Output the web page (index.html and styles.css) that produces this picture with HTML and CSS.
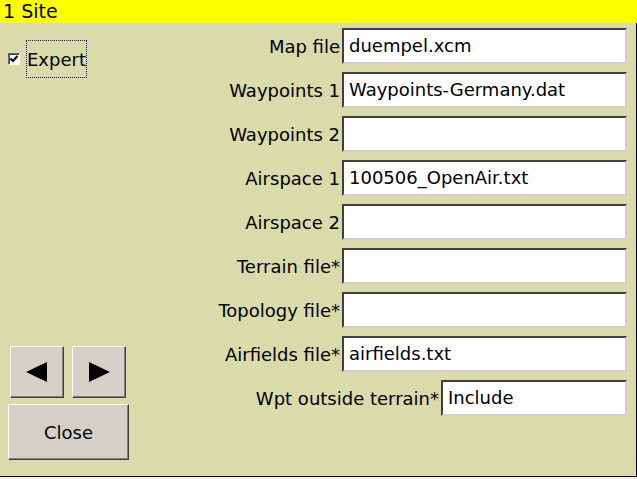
FILE: index.html
```html
<!DOCTYPE html>
<html>
<head>
<meta charset="utf-8">
<link rel="stylesheet" href="styles.css">
</head>
<body>
<div class="dialog">
  <div class="title">1 Site</div>
  <div class="content">
    <div class="side">
      <div class="check-row">
        <span class="checkbox"><svg width="10" height="10" viewBox="0 0 10 10"><path d="M1.5 4.5 L4 7 L8.5 2" fill="none" stroke="#000" stroke-width="2"/></svg></span>
        <span class="check-label">Expert</span>
      </div>
      <div class="buttons">
        <div class="arrows">
          <div class="btn arrow"><svg width="22" height="22" viewBox="0 0 22 22"><polygon points="0,11 21,1 21,21" fill="#000"/></svg></div>
          <div class="btn arrow"><svg width="22" height="22" viewBox="0 0 22 22"><polygon points="1,1 22,11 1,21" fill="#000"/></svg></div>
        </div>
        <div class="btn close">Close</div>
      </div>
    </div>
    <div class="form">
      <div class="row"><span class="label">Map file</span><span class="field">duempel.xcm</span></div>
      <div class="row"><span class="label">Waypoints 1</span><span class="field">Waypoints-Germany.dat</span></div>
      <div class="row"><span class="label">Waypoints 2</span><span class="field"></span></div>
      <div class="row"><span class="label">Airspace 1</span><span class="field">100506_OpenAir.txt</span></div>
      <div class="row"><span class="label">Airspace 2</span><span class="field"></span></div>
      <div class="row"><span class="label">Terrain file*</span><span class="field"></span></div>
      <div class="row"><span class="label">Topology file*</span><span class="field"></span></div>
      <div class="row"><span class="label">Airfields file*</span><span class="field">airfields.txt</span></div>
      <div class="row row-short"><span class="label">Wpt outside terrain*</span><span class="field">Include</span></div>
    </div>
  </div>
</div>
</body>
</html>
```
FILE: styles.css
```css
html, body {
  margin: 0;
  padding: 0;
  background: #f0f0f0;
  width: 637px;
  height: 479px;
  overflow: hidden;
}
.dialog {
  box-sizing: border-box;
  width: 637px;
  height: 477px;
  background: #dadbab;
  border-right: 1px solid #000;
  border-bottom: 1px solid #000;
  font-family: "DejaVu Sans", sans-serif;
  font-size: 18px;
  color: #000;
  display: flex;
  flex-direction: column;
}
.title {
  height: 23px;
  line-height: 23px;
  font-size: 19px;
  background: #ffff00;
  padding-left: 3px;
  margin-right: -1px;
}
.content {
  flex: 1;
  display: grid;
  grid-template-columns: 140px 1fr;
}
.side {
  display: flex;
  flex-direction: column;
  justify-content: space-between;
  padding: 17px 0 16px 8px;
}
.check-row {
  display: flex;
  align-items: center;
  gap: 6px;
}
.checkbox {
  box-sizing: border-box;
  width: 12px;
  height: 12px;
  background: #fff;
  border-top: 1px solid #6a6a6a;
  border-left: 1px solid #6a6a6a;
  border-right: 1px solid #fff;
  border-bottom: 1px solid #fff;
  box-shadow: inset 1px 1px 0 #404040;
  display: flex;
  align-items: center;
  justify-content: center;
}
.check-label {
  box-sizing: border-box;
  height: 38px;
  line-height: 38px;
  padding: 0;
  border: 1px dotted #1a1a6a;
}
.buttons {
  display: flex;
  flex-direction: column;
  gap: 6px;
}
.arrows {
  display: flex;
  gap: 8px;
  padding-left: 2px;
}
.btn {
  box-sizing: border-box;
  background: #d4d0c8;
  border-top: 1px solid #fff;
  border-left: 1px solid #fff;
  border-right: 1px solid #404040;
  border-bottom: 1px solid #404040;
  box-shadow: inset -1px -1px 0 #808080;
  display: flex;
  align-items: center;
  justify-content: center;
}
.arrow {
  width: 54px;
  height: 52px;
}
.close {
  width: 121px;
  height: 56px;
}
.form {
  display: flex;
  flex-direction: column;
  gap: 8px;
  padding: 5px 9px 0 0;
}
.row {
  display: grid;
  grid-template-columns: 1fr 285px;
  column-gap: 2px;
  height: 36px;
  align-items: center;
}
.row-short {
  grid-template-columns: 1fr 186px;
}
.label {
  text-align: right;
  white-space: nowrap;
}
.field {
  box-sizing: border-box;
  height: 36px;
  line-height: 32px;
  background: #fff;
  padding-left: 5px;
  border-top: 2px solid #404040;
  border-left: 2px solid #404040;
  border-right: 2px solid #d4d0c8;
  border-bottom: 2px solid #d4d0c8;
  white-space: nowrap;
  overflow: hidden;
}
```
